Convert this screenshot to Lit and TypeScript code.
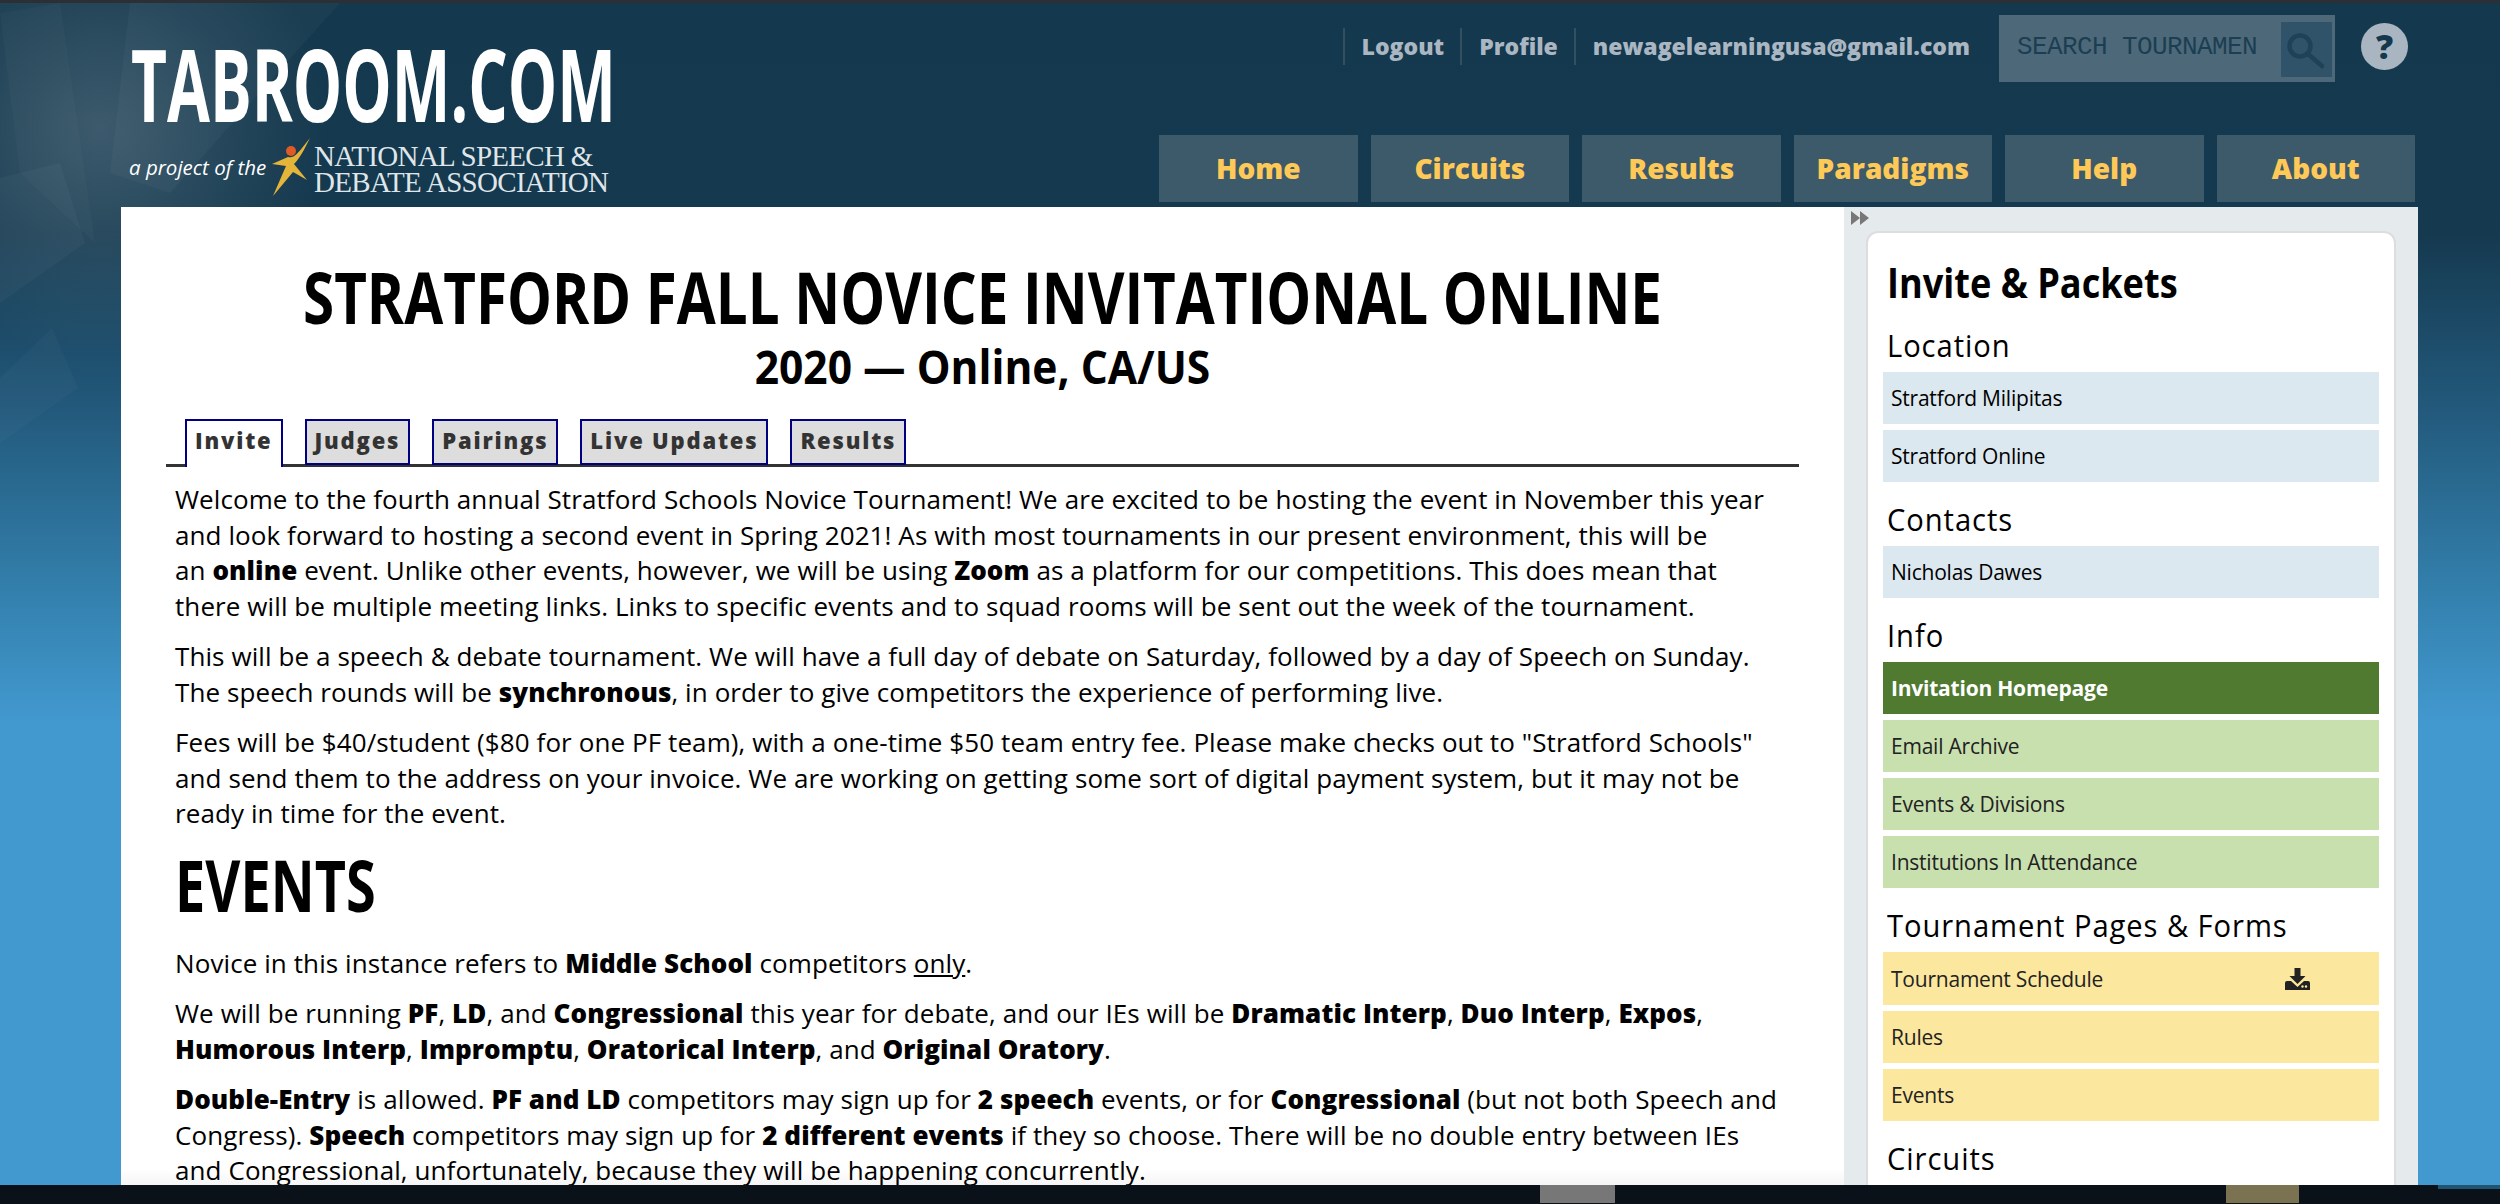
import { LitElement, html, css } from "lit";
import { customElement } from "lit/decorators.js";

@customElement("app-root")
export class AppRoot extends LitElement {
  static styles = css`
    :host { display: block; height: 1204px; overflow: hidden; font-family: "Open Sans", sans-serif; color: #000; }
    .top { height: 3px; background: #2c2f33; }
    .stage { position: relative; height: 1182px; overflow: hidden; background: linear-gradient(#14384d 0, #15394f 230px, #22587a 400px, #3482b0 600px, #4299cf 720px); }
    .bottom { position: relative; height: 19px; background: #0a1119; }
    .deco { position: absolute; left: 0; top: 0; }
    .head { position: relative; display: flex; justify-content: space-between; height: 204px; padding: 0 85px 0 129px; box-sizing: border-box; }
    .logo { display: flex; flex-direction: column; width: 490px; }
    .wordmark { margin: 44px 0 0 2px; height: 72px; font: 700 100px/72px "Open Sans", sans-serif; color: #fff; transform: scaleX(.622); transform-origin: 0 0; white-space: nowrap; }
    .project { display: flex; align-items: center; margin-top: 17px; height: 62px; }
    .project i { color: #fff; font-size: 20.5px; white-space: nowrap; width: 143px; }
    .project svg { flex: none; }
    .nsda { color: #dfe5e8; font: 400 29px/26px "Liberation Serif", serif; letter-spacing: -.7px; white-space: nowrap; margin: 3px 0 0 4px; }
    .right { display: flex; flex-direction: column; align-items: flex-end; }
    .util { display: flex; align-items: flex-start; margin-top: 12px; }
    .links { display: flex; margin-top: 13px; margin-right: 13px; }
    .links a { border-left: 2px solid #33505f; padding: 0 16px 0 17px; height: 37px; font: 800 23px/36px "Open Sans", sans-serif; color: #aab6c1; }
    .search { display: flex; justify-content: space-between; width: 336px; height: 67px; padding: 7px 3px 5px 18px; box-sizing: border-box; background: #4d6979; }
    .search span { font: 400 26px/50px "Liberation Mono", monospace; letter-spacing: -.6px; color: #1c3e52; white-space: nowrap; }
    .search b { display: block; width: 51px; height: 55px; background: #31536a; }
    .search svg { display: block; }
    .help { width: 47px; height: 47px; margin: 8px 7px 0 26px; border-radius: 50%; background: #a9b6c2; color: #14384d; font: 800 34px/47px "Open Sans", sans-serif; text-align: center; }
    .nav { display: flex; gap: 13px; margin-top: 53px; }
    .nav a { width: 198.5px; height: 67px; background: #3d5a6b; color: #fec956; font: 800 28px/67px "Open Sans", sans-serif; text-align: center; }
    .page { display: flex; margin: 0 82px 0 121px; position: relative; }
    .main { width: 1723px; height: 978px; background: linear-gradient(#fff 962px, #f5f5f5); padding: 0 45px; box-sizing: border-box; overflow: hidden; }
    h1 { display: flex; justify-content: center; margin: 54px 0 0; height: 74px; font: 700 72px/70px "Open Sans", sans-serif; white-space: nowrap; transform: scaleX(.785); }
    h2.sub { margin: 0; height: 62px; font: 700 47px/62px "Open Sans", sans-serif; text-align: center; transform: scaleX(.905); }
    .tabs { display: flex; align-items: flex-start; gap: 22px; margin: 22px 0 0; padding-left: 19px; height: 45px; border-bottom: 3px solid #333; }
    .tabs a { box-sizing: border-box; height: 46px; padding: 0 8px; border: 2px solid #000080; background: #ddd; color: #333; font: 800 22px/39px "Open Sans", sans-serif; letter-spacing: 1.8px; }
    .tabs a.on { background: #fff; height: 48px; border-bottom: 0; }
    .body { padding-left: 9px; font-size: 26px; line-height: 35.5px; letter-spacing: .09px; }
    .body b { font-weight: 800; }
    .body p { margin: 0 0 15px; }
    .body p:first-child { margin-top: 15px; }
    .body h2 { margin: -3px 0 22px; font: 700 72px/80px "Open Sans", sans-serif; transform: scaleX(.75); transform-origin: 0 0; }
    .side { width: 574px; height: 978px; background: #e5eaed; position: relative; padding: 24px 22px 0 22px; box-sizing: border-box; }
    .arrow { position: absolute; left: 7px; top: 3px; }
    .card { height: 1000px; background: #fff; border: 2px solid #ddd; border-radius: 12px; padding: 24px 15px; box-sizing: border-box; }
    .card h3 { margin: 0 0 15px 4px; font: 700 42px/50px "Open Sans", sans-serif; transform: scaleX(.86); transform-origin: 0 0; white-space: nowrap; }
    .card h4 { margin: 0 0 0 4px; height: 50px; font: 400 31px/47px "Open Sans", sans-serif; letter-spacing: 1px; transform: scaleX(.94); transform-origin: 0 0; white-space: nowrap; }
    .row { display: flex; justify-content: space-between; align-items: center; height: 52px; margin-bottom: 6px; padding: 0 7px 0 8px; box-sizing: border-box; font-size: 21px; letter-spacing: -.22px; }
    .blue { background: #dce8ef; }
    .green { background: #c8e0ae; color: #222; }
    .dark { background: #4f7a2f; color: #fff; font-weight: 700; }
    .yellow { background: #fce79e; color: #222; }
    .gap { height: 8px; }
    .tall { height: 53px; }
    .tall svg { margin-right: 62px; }
    .thumb { position: absolute; top: 0; height: 18px; }
    .t1 { left: 1540px; width: 75px; background: #777; }
    .t2 { left: 2226px; width: 73px; background: #7a7250; }
    .t3 { left: 2438px; width: 62px; height: 4px; background: #1f5573; }
  `;

  render() {
    return html`
      <div class="top"></div>
      <div class="stage">
        <svg class="deco" width="460" height="460" viewBox="0 0 460 460">
          <defs>
            <radialGradient id="glow" cx="100" cy="125" r="230" gradientUnits="userSpaceOnUse">
              <stop offset="0" stop-color="#fff" stop-opacity=".17"></stop>
              <stop offset=".55" stop-color="#fff" stop-opacity=".07"></stop>
              <stop offset="1" stop-color="#fff" stop-opacity="0"></stop>
            </radialGradient>
          </defs>
          <rect width="460" height="460" fill="url(#glow)"></rect>
          <polygon points="0,10 60,0 95,240 20,170" fill="#fff" opacity=".025"></polygon>
          <polygon points="130,0 340,0 170,190 110,170" fill="#fff" opacity=".03"></polygon>
          <polygon points="0,175 60,160 85,240 0,300" fill="#fff" opacity=".03"></polygon>
          <polygon points="0,375 52,325 78,385 0,440" fill="#fff" opacity=".025"></polygon>
        </svg>
        <header class="head">
          <div class="logo">
            <div class="wordmark">TABROOM.COM</div>
            <div class="project">
              <i>a project of the</i>
              <svg width="38" height="58" viewBox="0 0 38 58">
                <path d="M0 26 L16 19 C22 20 24 18 38 0 C32 12 28 20 22 26 L35 42 L21 34 L1 58 L14 28Z" fill="#e5b53a"></path>
                <circle cx="19" cy="13" r="5" fill="#df5a26"></circle>
              </svg>
              <div class="nsda">NATIONAL SPEECH &amp;<br />DEBATE ASSOCIATION</div>
            </div>
          </div>
          <div class="right">
            <div class="util">
              <div class="links"><a>Logout</a><a>Profile</a><a>newagelearningusa@gmail.com</a></div>
              <div class="search">
                <span>SEARCH TOURNAMEN</span>
                <b><svg width="51" height="55" viewBox="0 0 51 55" fill="none" stroke="#1f4256" stroke-width="4.5" stroke-linecap="round"><circle cx="19" cy="24" r="10.5"></circle><path d="M27 32 L41 44"></path></svg></b>
              </div>
              <div class="help">?</div>
            </div>
            <nav class="nav"><a>Home</a><a>Circuits</a><a>Results</a><a>Paradigms</a><a>Help</a><a>About</a></nav>
          </div>
        </header>
        <div class="page">
          <main class="main">
            <h1>STRATFORD FALL NOVICE INVITATIONAL ONLINE</h1>
            <h2 class="sub">2020 — Online, CA/US</h2>
            <div class="tabs"><a class="on">Invite</a><a>Judges</a><a>Pairings</a><a>Live Updates</a><a>Results</a></div>
            <div class="body">
              <p>Welcome to the fourth annual Stratford Schools Novice Tournament! We are excited to be hosting the event in November this year<br />and look forward to hosting a second event in Spring 2021! As with most tournaments in our present environment, this will be<br />an <b>online</b> event. Unlike other events, however, we will be using <b>Zoom</b> as a platform for our competitions. This does mean that<br />there will be multiple meeting links. Links to specific events and to squad rooms will be sent out the week of the tournament.</p>
              <p>This will be a speech &amp; debate tournament. We will have a full day of debate on Saturday, followed by a day of Speech on Sunday.<br />The speech rounds will be <b>synchronous</b>, in order to give competitors the experience of performing live.</p>
              <p>Fees will be $40/student ($80 for one PF team), with a one-time $50 team entry fee. Please make checks out to "Stratford Schools"<br />and send them to the address on your invoice. We are working on getting some sort of digital payment system, but it may not be<br />ready in time for the event.</p>
              <h2>EVENTS</h2>
              <p>Novice in this instance refers to <b>Middle School</b> competitors <u>only</u>.</p>
              <p>We will be running <b>PF</b>, <b>LD</b>, and <b>Congressional</b> this year for debate, and our IEs will be <b>Dramatic Interp</b>, <b>Duo Interp</b>, <b>Expos</b>,<br /><b>Humorous Interp</b>, <b>Impromptu</b>, <b>Oratorical Interp</b>, and <b>Original Oratory</b>.</p>
              <p><b>Double-Entry</b> is allowed. <b>PF and LD</b> competitors may sign up for <b>2 speech</b> events, or for <b>Congressional</b> (but not both Speech and<br />Congress). <b>Speech</b> competitors may sign up for <b>2 different events</b> if they so choose. There will be no double entry between IEs<br />and Congressional, unfortunately, because they will be happening concurrently.</p>
            </div>
          </main>
          <aside class="side">
            <svg class="arrow" width="18" height="16" viewBox="0 0 18 16" fill="#777"><path d="M0 1 L9 8 L0 15Z M9 1 L18 8 L9 15Z"></path></svg>
            <div class="card">
              <h3>Invite &amp; Packets</h3>
              <h4>Location</h4>
              <div class="row blue">Stratford Milipitas</div>
              <div class="row blue">Stratford Online</div>
              <div class="gap"></div>
              <h4>Contacts</h4>
              <div class="row blue">Nicholas Dawes</div>
              <div class="gap"></div>
              <h4>Info</h4>
              <div class="row dark">Invitation Homepage</div>
              <div class="row green">Email Archive</div>
              <div class="row green">Events &amp; Divisions</div>
              <div class="row green">Institutions In Attendance</div>
              <div class="gap"></div>
              <h4>Tournament Pages &amp; Forms</h4>
              <div class="row yellow tall">Tournament Schedule
                <svg width="25" height="22" viewBox="0 0 25 22" fill="#222"><path d="M9.5 0h6v8h5l-8 8-8-8h5z"></path><path d="M2 13h4l6.5 6 6.5-6h4a2 2 0 0 1 2 2v7H0v-7a2 2 0 0 1 2-2z"></path><circle cx="17.5" cy="18.5" r="1.2" fill="#fce79e"></circle><circle cx="21" cy="18.5" r="1.2" fill="#fce79e"></circle></svg>
              </div>
              <div class="row yellow">Rules</div>
              <div class="row yellow">Events</div>
              <div class="gap"></div>
              <h4>Circuits</h4>
            </div>
          </aside>
        </div>
      </div>
      <div class="bottom"><div class="thumb t1"></div><div class="thumb t2"></div><div class="thumb t3"></div></div>
    `;
  }
}
